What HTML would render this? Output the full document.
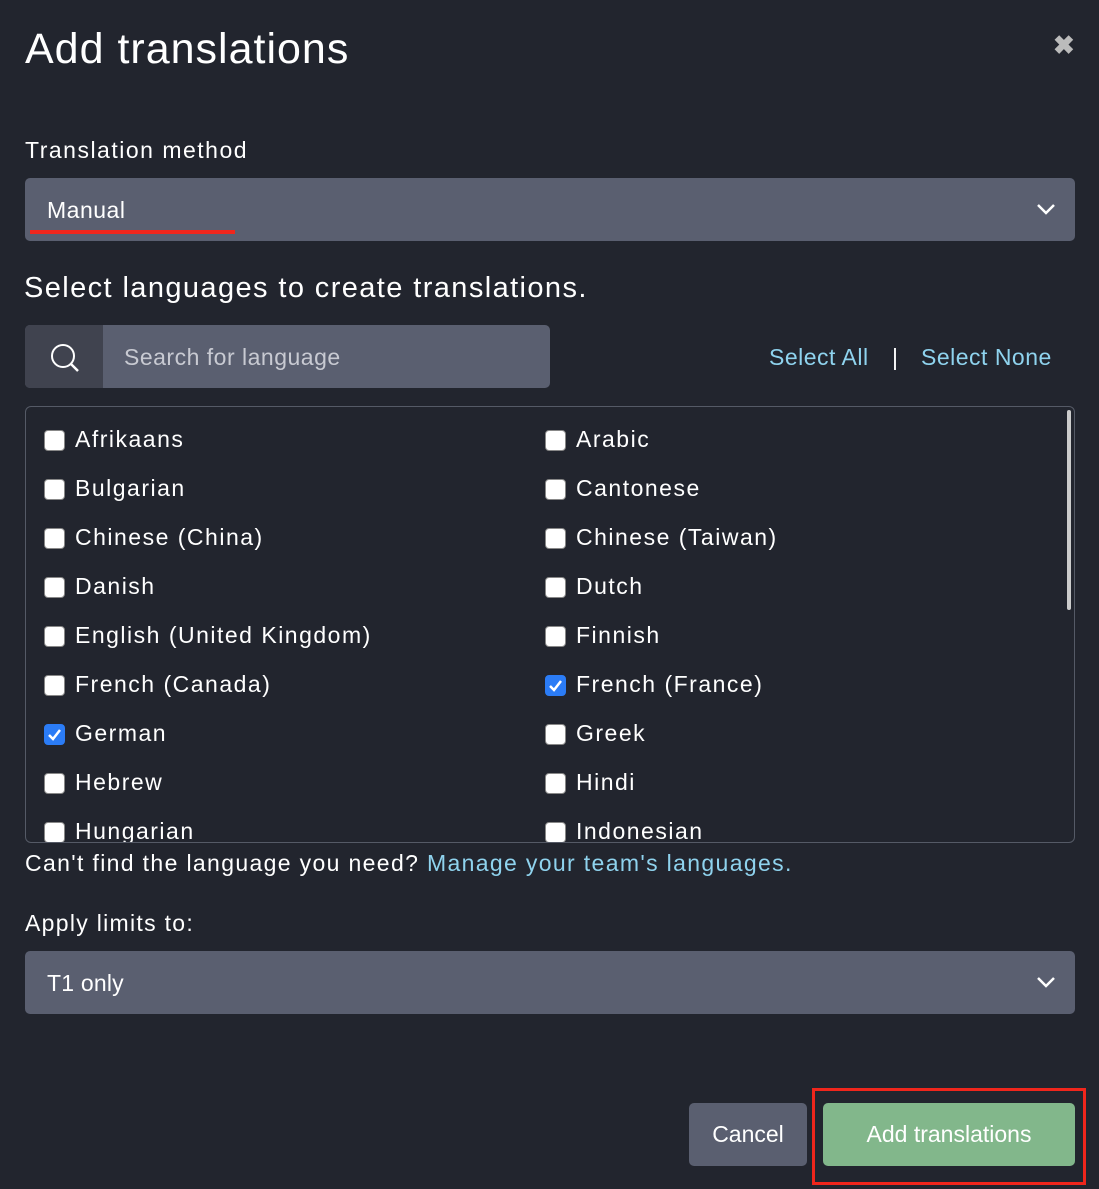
<!DOCTYPE html>
<html><head><style>
*{box-sizing:border-box;margin:0;padding:0}
body{width:1099px;height:1189px;background:#22252e;font-family:"Liberation Sans",sans-serif;color:#fff;position:relative;overflow:hidden}
.a{position:absolute;white-space:nowrap}
.sel{position:absolute;left:25px;width:1050px;height:63px;background:#5a5f70;border-radius:5px}
.cb{position:absolute;width:21px;height:21px;background:#fff;border:1px solid #888;border-radius:4px}
.cb.on{background:#2b7cf6;border-color:#2b7cf6}
.lab{position:absolute;font-size:23px;letter-spacing:1.5px}
</style></head><body>
<div class="a" style="left:25px;top:25px;font-size:43px;letter-spacing:1px">Add translations</div>
<div class="a" style="left:1053px;top:30px;font-size:26px;color:#bbb;font-weight:bold">✖</div>
<div class="a" style="left:25px;top:137px;font-size:23px;letter-spacing:1.5px">Translation method</div>
<div class="sel" style="top:178px"></div>
<div class="a" style="left:47px;top:197px;font-size:23px;letter-spacing:0.5px">Manual</div>
<div class="a" style="left:30px;top:230px;width:205px;height:4px;background:#f0261c"></div>
<svg class="a" style="left:1036px;top:202px" width="20" height="14"><path d="M2 3l8 8 8-8" stroke="#fff" stroke-width="2.5" fill="none"/></svg>
<div class="a" style="left:24px;top:272px;font-size:29px;letter-spacing:1.4px">Select languages to create translations.</div>
<div class="a" style="left:25px;top:325px;width:525px;height:63px;background:#5a5f70;border-radius:5px;overflow:hidden"><div style="width:78px;height:63px;background:#40434f"></div></div>
<svg class="a" style="left:48px;top:341px" width="34" height="34"><circle cx="15" cy="15" r="11" stroke="#fff" stroke-width="2" fill="none"/><path d="M23 23l7 7" stroke="#fff" stroke-width="2.5"/></svg>
<div class="a" style="left:124px;top:344px;font-size:23px;color:#c8cad2;letter-spacing:0.5px">Search for language</div>
<div class="a" style="left:769px;top:344px;font-size:23px;color:#8fd3ee;letter-spacing:0.5px">Select All</div>
<div class="a" style="left:892px;top:344px;font-size:23px">|</div>
<div class="a" style="left:921px;top:344px;font-size:23px;color:#8fd3ee;letter-spacing:0.5px">Select None</div>
<div class="a" style="left:25px;top:406px;width:1050px;height:437px;border:1px solid #555a66;border-radius:6px;overflow:hidden">
<div class="a" style="left:1041px;top:3px;width:4px;height:200px;background:#ccc;border-radius:2px"></div>
</div>
<div class="a" style="left:0;top:407px;width:1099px;height:435px;overflow:hidden">
<div style="position:relative">
<div class="cb" style="left:44px;top:23px"></div><div class="lab" style="left:75px;top:19px">Afrikaans</div>
<div class="cb" style="left:545px;top:23px"></div><div class="lab" style="left:576px;top:19px">Arabic</div>
<div class="cb" style="left:44px;top:72px"></div><div class="lab" style="left:75px;top:68px">Bulgarian</div>
<div class="cb" style="left:545px;top:72px"></div><div class="lab" style="left:576px;top:68px">Cantonese</div>
<div class="cb" style="left:44px;top:121px"></div><div class="lab" style="left:75px;top:117px">Chinese (China)</div>
<div class="cb" style="left:545px;top:121px"></div><div class="lab" style="left:576px;top:117px">Chinese (Taiwan)</div>
<div class="cb" style="left:44px;top:170px"></div><div class="lab" style="left:75px;top:166px">Danish</div>
<div class="cb" style="left:545px;top:170px"></div><div class="lab" style="left:576px;top:166px">Dutch</div>
<div class="cb" style="left:44px;top:219px"></div><div class="lab" style="left:75px;top:215px">English (United Kingdom)</div>
<div class="cb" style="left:545px;top:219px"></div><div class="lab" style="left:576px;top:215px">Finnish</div>
<div class="cb" style="left:44px;top:268px"></div><div class="lab" style="left:75px;top:264px">French (Canada)</div>
<div class="cb on" style="left:545px;top:268px"><svg width="19" height="19"><path d="M4 10l4 4 7-9" stroke="#fff" stroke-width="2.5" fill="none"/></svg></div><div class="lab" style="left:576px;top:264px">French (France)</div>
<div class="cb on" style="left:44px;top:317px"><svg width="19" height="19"><path d="M4 10l4 4 7-9" stroke="#fff" stroke-width="2.5" fill="none"/></svg></div><div class="lab" style="left:75px;top:313px">German</div>
<div class="cb" style="left:545px;top:317px"></div><div class="lab" style="left:576px;top:313px">Greek</div>
<div class="cb" style="left:44px;top:366px"></div><div class="lab" style="left:75px;top:362px">Hebrew</div>
<div class="cb" style="left:545px;top:366px"></div><div class="lab" style="left:576px;top:362px">Hindi</div>
<div class="cb" style="left:44px;top:415px"></div><div class="lab" style="left:75px;top:411px">Hungarian</div>
<div class="cb" style="left:545px;top:415px"></div><div class="lab" style="left:576px;top:411px">Indonesian</div>
</div></div>
<div class="a" style="left:25px;top:850px;font-size:23px;letter-spacing:1.35px">Can't find the language you need? <span style="color:#8fd3ee">Manage your team's languages.</span></div>
<div class="a" style="left:25px;top:910px;font-size:23px;letter-spacing:1.3px">Apply limits to:</div>
<div class="sel" style="top:951px"></div>
<div class="a" style="left:47px;top:970px;font-size:23px;letter-spacing:0.2px">T1 only</div>
<svg class="a" style="left:1036px;top:975px" width="20" height="14"><path d="M2 3l8 8 8-8" stroke="#fff" stroke-width="2.5" fill="none"/></svg>
<div class="a" style="left:689px;top:1103px;width:118px;height:63px;background:#5a5f70;border-radius:5px;font-size:23px;text-align:center;line-height:63px">Cancel</div>
<div class="a" style="left:812px;top:1088px;width:274px;height:97px;border:3px solid #f0261c"></div>
<div class="a" style="left:823px;top:1103px;width:252px;height:63px;background:#82b78b;border-radius:5px;font-size:23px;text-align:center;line-height:63px">Add translations</div>
</body></html>
